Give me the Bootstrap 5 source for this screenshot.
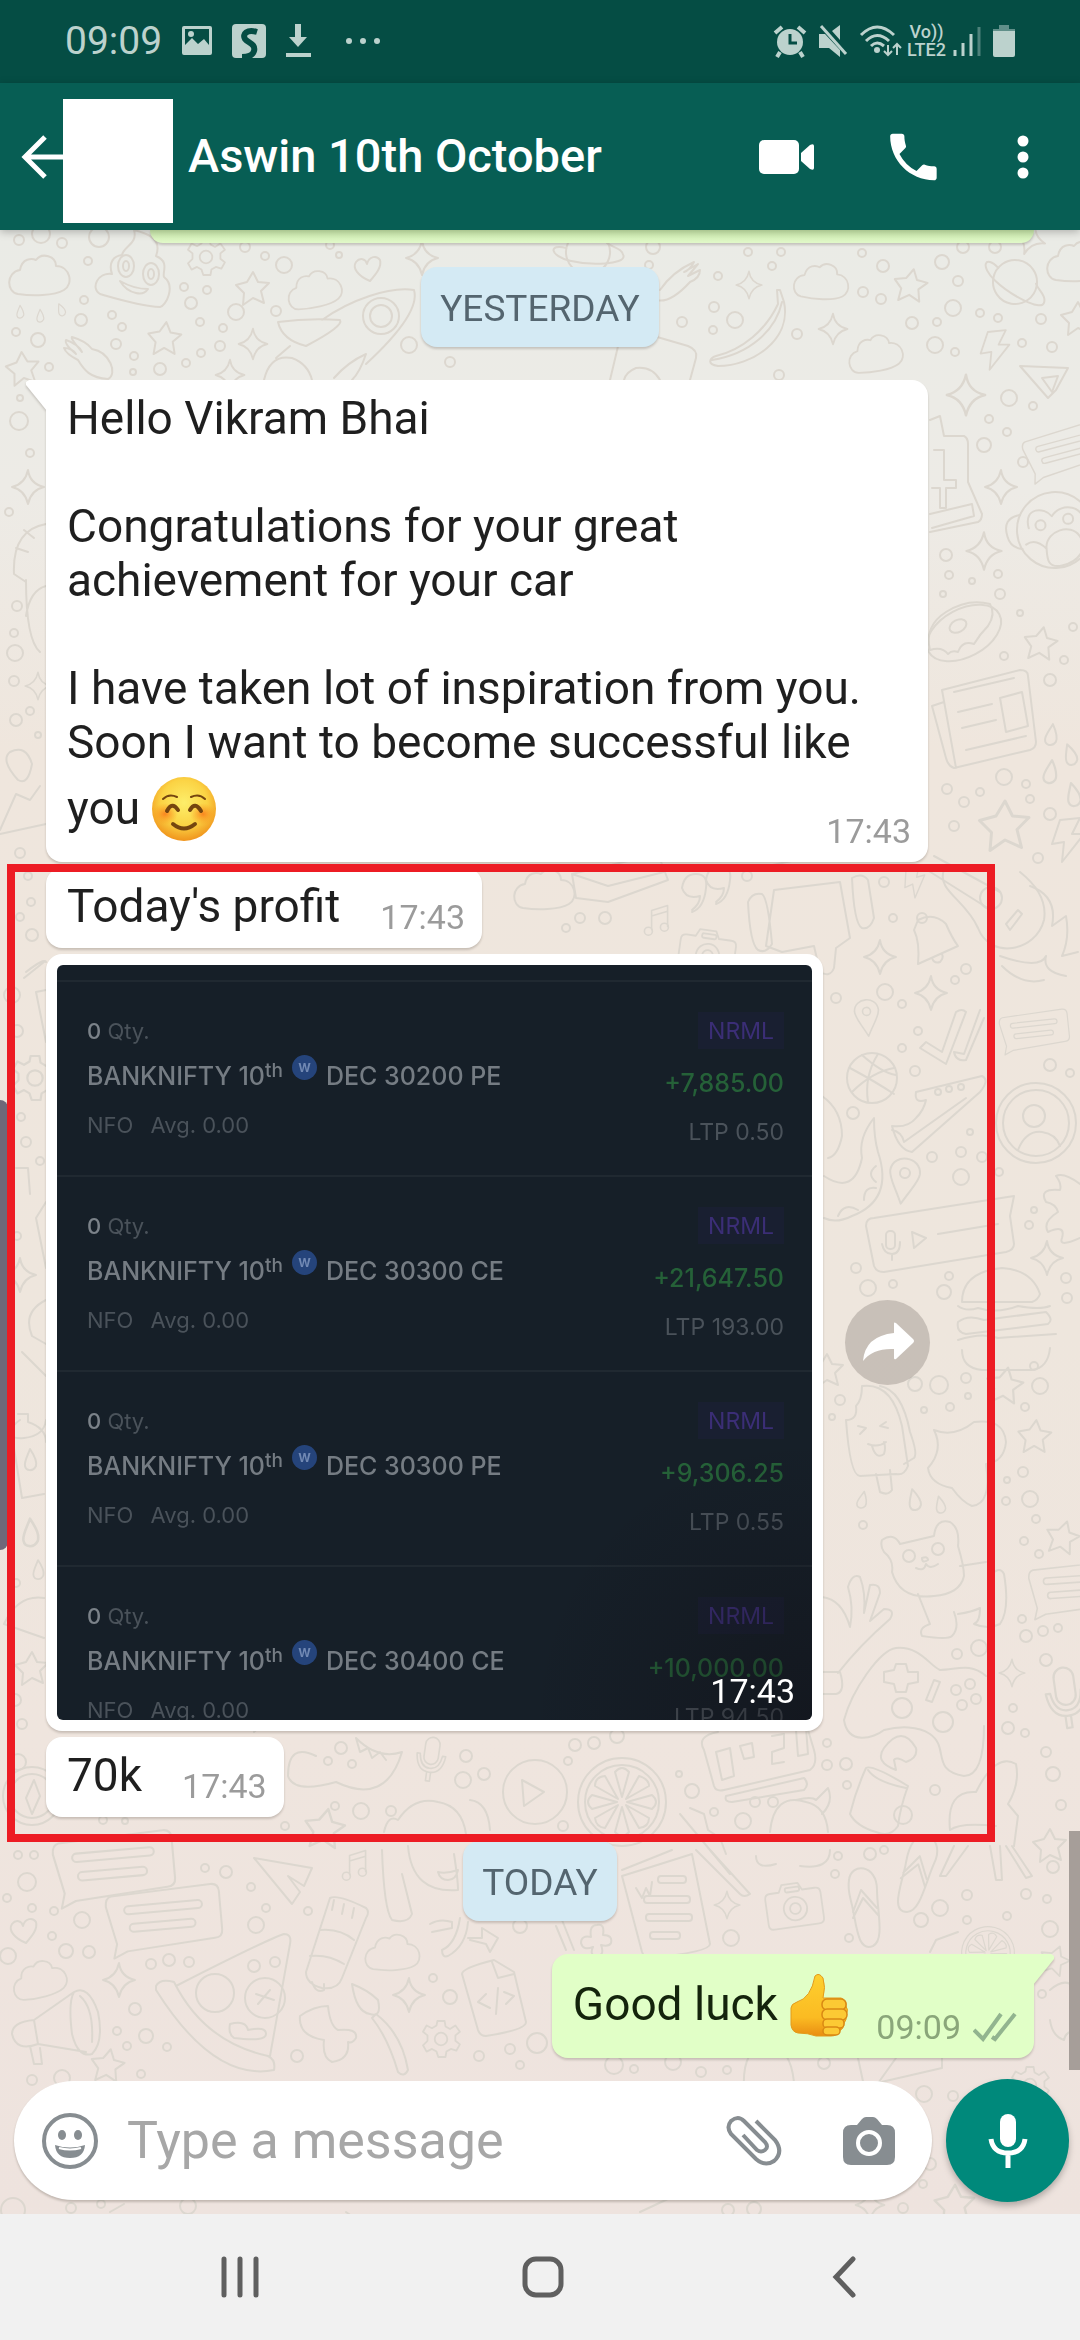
<!DOCTYPE html>
<html lang="en">
<head>
<meta charset="utf-8">
<meta name="viewport" content="width=device-width, initial-scale=1">
<title>Aswin 10th October</title>
<link rel="stylesheet" href="https://cdn.jsdelivr.net/npm/bootstrap@5.3.0/dist/css/bootstrap.min.css">
<style>
  body { font-family: Roboto, "Liberation Sans", sans-serif; background: #f1f1f1; color: #1f1f1f; font-size: 46px; line-height: 54px; }
  svg { display: block; flex: none; }
  .icon-btn { background: none; border: 0; padding: 0; color: inherit; }

  /* status bar */
  .status-bar { background: #054d44; color: #bcd2cd; height: 83px; padding: 0 65px 2px 65px; }
  .notices { gap: 18px; }
  .more-notices { margin-left: 14px; }
  .signals { gap: 11px; }
  .clock { font-size: 39px; line-height: 46px; }
  .volte { font-size: 18px; line-height: 18px; font-weight: 500; margin: 0 -5px 0 -7px; }

  /* header */
  .chat-header { background: #075e54; color: #fff; height: 147px; padding: 0 51px 0 21px; z-index: 3; box-shadow: 0 2px 8px rgba(0,0,0,.25); }
  .avatar-box { width: 110px; height: 124px; background: #fff; }
  .contact-name { font-size: 47px; line-height: 54px; font-weight: 500; margin-left: 15px; padding-bottom: 2px; }
  .header-actions { gap: 70px; }

  /* conversation */
  .conversation { background: linear-gradient(#eaebe6 0, #edebe6 260px, #efe6dd 520px, #eee6dd 1100px, #efe5de 1500px, #eee3de 100%); overflow: hidden; }
  .doodles { position: absolute; inset: 0; width: 100%; height: 100%; fill: none; stroke: #dcd7cf; stroke-width: 2; stroke-linejoin: round; stroke-linecap: round; }
  .msg { background: #fff; border-radius: 16px; padding: 11px 17px 10px 21px; filter: drop-shadow(0 2px 1px rgba(60,50,40,.22)); }
  .msg-row { min-height: 59px; column-gap: 40px; }
  .msg-row.tall { min-height: 83px; column-gap: 27px; }
  .msg-out { background: #e1ffc7; color: #14240c; }
  .msg-prev { height: 13px; border-radius: 0 0 16px 16px; padding: 0; margin-left: 104px; background: linear-gradient(#cdeeae, #e1f8c9); }
  .msg-long { max-width: 882px; border-top-left-radius: 0; }
  .msg-long::before, .msg-out.tailed::after { content: ""; position: absolute; top: 0; width: 21px; height: 31px; background: inherit; }
  .msg-long::before { left: -20px; clip-path: polygon(3px 0, 100% 0, 100% 100%, 0 5px, 0 2px); }
  .msg-out.tailed { border-top-right-radius: 0; }
  .msg-out.tailed::after { right: -20px; clip-path: polygon(0 0, 18px 0, 100% 2px, 100% 5px, 0 100%); }
  .stamp { font-size: 34px; line-height: 40px; color: #9b9b9b; padding-bottom: 1px; }
  .msg-out .stamp { color: #8aa67a; gap: 12px; }
  .emo { display: inline-block; vertical-align: -17px; margin-top: 8px; }
  .day-chip { background: #d4eaf4; color: #54656f; border-radius: 16px; font-size: 37px; line-height: 44px; padding: 20px 19px 16px; filter: drop-shadow(0 2px 1px rgba(60,50,40,.22)); }
  .after-day { margin-top: 33px; }
  .thread { padding: 0 46px; }
  .messages { gap: 6px; margin-top: 6px; }
  .msg-photo { max-width: 777px; padding: 11px; }
  .forward-btn { width: 85px; height: 85px; background: rgba(120,112,106,.32); color: #fff; margin-left: 22px; }

  /* highlight frame over the profit messages */
  .highlight::after { content: ""; position: absolute; top: -4px; bottom: -25px; left: -39px; right: 39px; border: 8px solid #ed1c24; pointer-events: none; z-index: 2; }
  .edge-handle { position: absolute; left: 0; top: 870px; width: 8px; height: 450px; background: #6f6879; border-radius: 0 10px 10px 0; }
  .scroll-thumb { position: absolute; right: 0; bottom: 144px; width: 11px; height: 239px; background: #a69e99; }

  /* positions photo */
  .photo { aspect-ratio: 1; background: #161f28; border-radius: 6px; overflow: hidden; padding-top: 15px; font-family: Inter, sans-serif; font-size: 22px; line-height: 28px; color: #4a525a; }
  .photo::after { content: ""; position: absolute; inset: 0; background: radial-gradient(circle at 100% 100%, rgba(16,14,20,.45), rgba(16,14,20,0) 280px); }
  .position-row { height: 195px; border-top: 2px solid #202931; padding: 35px 28px 0 30px; }
  .pos-name { color: #757c83; font-size: 25px; font-weight: 500; margin: 17px 0 21px; }
  .pos-name sup { font-size: 19px; line-height: 0; top: -8px; vertical-align: baseline; }
  .pos-qty { color: #7b8289; font-weight: 500; }
  .week-dot { width: 25px; height: 25px; border-radius: 50%; background: #25447b; color: #7189b4; font-size: 15px; line-height: 24px; font-weight: 600; margin: -18px 9px 0; }
  .pos-tag { background: #191f31; color: #3b2e76; padding: 5px 10px 4px; margin-top: -5px; font-size: 23px; }
  .pos-gain { color: #256138; font-size: 25px; font-weight: 500; margin: 20px 0 21px; }
  .pos-ltp { font-size: 23px; }
  .photo-stamp { position: absolute; right: 17px; bottom: 9px; z-index: 1; color: #fff; font-family: Roboto, sans-serif; font-size: 34px; line-height: 40px; }

  /* composer */
  .composer { padding: 0 11px 12px 14px; margin-top: 21px; gap: 14px; }
  .compose-box { background: #fff; border-radius: 60px; height: 119px; padding: 0 37px 0 28px; color: #878d91; filter: drop-shadow(0 2px 1px rgba(60,50,40,.25)); }
  .compose-box input { font-size: 52px; line-height: 60px; padding: 0 0 0 29px; background: none; }
  .compose-box input::placeholder { color: #a7a7a7; opacity: 1; }
  .compose-tools { gap: 61px; }
  .mic-btn { width: 123px; height: 123px; background: #00897b; color: #fff; filter: drop-shadow(0 4px 3px rgba(0,0,0,.25)); }
  .nav-keys { height: 126px; background: #f1f1f1; color: #5f5f5f; padding: 0 218px 0 221px; }
</style>
</head>
<body class="d-flex flex-column min-vh-100">

<div class="status-bar d-flex align-items-center justify-content-between">
  <div class="notices d-flex align-items-center">
    <span class="clock">09:09</span>
    <svg width="34" height="34" viewBox="0 0 34 34"><path fill="currentColor" fill-rule="evenodd" d="M4 2h26a2 2 0 0 1 2 2v25a2 2 0 0 1-2 2H4a2 2 0 0 1-2-2V4a2 2 0 0 1 2-2Zm1 3v16l7-7 6 6 6-5 5 6V5Z"/><circle cx="11" cy="10" r="3" fill="currentColor"/></svg>
    <svg width="34" height="34" viewBox="0 0 34 34"><rect width="34" height="34" rx="4" fill="currentColor"/><path d="M25 8C15 5 10 10 13 15c3 4 11 5 9 12-1 4-5 6-12 6" fill="none" stroke="#054d44" stroke-width="6"/></svg>
    <svg width="28" height="36" viewBox="0 0 28 36"><path fill="currentColor" d="M11 1h6v13h6l-9 10-9-10h6ZM2 30h25v4H2Z"/></svg>
    <svg class="more-notices" width="40" height="10" viewBox="0 0 40 10"><g fill="currentColor"><circle cx="5" cy="5" r="3"/><circle cx="19" cy="5" r="3"/><circle cx="33" cy="5" r="3"/></g></svg>
  </div>
  <div class="signals d-flex align-items-center">
    <svg width="34" height="36" viewBox="0 0 34 36"><circle cx="17" cy="19" r="13" fill="currentColor"/><path d="M2 10 9 4M32 10l-7-6M7 29l-3 5M27 29l3 5" stroke="currentColor" stroke-width="4"/><path d="M17 11v9h7" fill="none" stroke="#054d44" stroke-width="3"/></svg>
    <svg width="30" height="36" viewBox="0 0 30 36"><path fill="currentColor" d="M1 11h6l15 16v7L11 25H1ZM22 2v15l-8-9Z"/><path d="m3 3 25 28" stroke="currentColor" stroke-width="3"/></svg>
    <svg width="44" height="36" viewBox="0 0 44 36"><g fill="none" stroke="currentColor" stroke-width="3"><path d="M2 12q16-16 33 0M7 18q11-11 23 0M12 23q6-6 13 0"/><path d="M29 22v10m-4-4 4 4 4-4M38 32V21m-4 4 4-4 4 4" stroke-width="2"/></g><circle cx="18" cy="27" r="3" fill="currentColor"/></svg>
    <span class="volte text-center">Vo))<br>LTE2</span>
    <svg width="30" height="34" viewBox="0 0 30 34"><g stroke="currentColor" stroke-width="3"><path d="M3 26v6M11 19v13M19 10v22"/><path d="M27 3v29" opacity=".4"/></g></svg>
    <svg width="22" height="36" viewBox="0 0 22 36"><path fill="currentColor" opacity=".5" d="M6 2h10v4h6v4H0V6h6Z"/><path fill="currentColor" d="M0 8h22v24a2 2 0 0 1-2 2H2a2 2 0 0 1-2-2Z"/></svg>
  </div>
</div>

<header class="chat-header position-relative d-flex align-items-center">
  <button class="icon-btn" type="button" aria-label="Back"><svg width="42" height="46" viewBox="0 0 42 46"><path d="M42 23H5M24 3 4 23l20 20" fill="none" stroke="currentColor" stroke-width="5"/></svg></button>
  <div class="avatar-box flex-shrink-0 align-self-start mt-3"></div>
  <h1 class="contact-name mb-0 flex-grow-1">Aswin 10th October</h1>
  <div class="header-actions d-flex align-items-center">
    <button class="icon-btn" type="button" aria-label="Video call"><svg width="56" height="36" viewBox="0 0 56 36"><rect y="1" width="40" height="34" rx="5" fill="currentColor"/><path fill="currentColor" d="m42 14 9-8q4-2 4 1v22q0 3-4 1l-9-8Z"/></svg></button>
    <button class="icon-btn" type="button" aria-label="Call"><svg width="62" height="62" viewBox="1 0 24 24"><path fill="currentColor" d="M6.6 10.8a15.100 15.100 0 0 0 6.600 6.600l2.200-2.200c.3-.3.7-.4 1-.2 1.100.4 2.300.6 3.600.6.6 0 1 .4 1 1V20c0 .6-.4 1-1 1C10.600 21 3 13.400 3 4c0-.6.4-1 1-1h3.500c.6 0 1 .4 1 1 0 1.300.2 2.500.6 3.600.1.300 0 .7-.3 1Z"/></svg></button>
    <button class="icon-btn" type="button" aria-label="More options"><svg width="12" height="46" viewBox="0 0 12 46"><g fill="currentColor"><circle cx="6" cy="7" r="5.500"/><circle cx="6" cy="23" r="5.500"/><circle cx="6" cy="39" r="5.500"/></g></svg></button>
  </div>
</header>

<main class="conversation position-relative d-flex flex-column flex-grow-1">
  <svg class="doodles" viewBox="0 230 1080 1984" preserveAspectRatio="xMidYMin slice" aria-hidden="true">
    <defs>
      <path id="d-cloud" d="M-22 18C-34 16-34-4-20-6-18-18-8-18-4-16 2-24 16-20 16-10 30-10 34 8 24 14 14 20-8 20-22 18Z"/>
      <path id="d-star" d="m0-16 5 10 11 1-8 8 3 12-11-5-10 7 1-12-8-8 11-3Z"/>
      <path id="d-spark" d="M0-17Q2-3 16 0 3 3 0 17-3 3-16 0-3-3 0-17Z"/>
      <path id="d-drop" d="M0-11C6-2 7 2 6 6 3 12-4 11-5 6-6 2-3-3 0-11Z"/>
      <path id="d-heart" d="M2 13C-10 8-16 0-12-6-8-11-2-9-1-4 1-12 9-13 12-8 14-1 8 6 2 13Z"/>
      <g id="d-gear"><path d="m-4-20 8 0 1 6 5 3 6-4 5 7-5 4v6l5 4-4 7-6-2-5 3-1 6h-8l-2-6-5-3-6 3-4-7 5-5v-6l-5-4 4-7 6 3 5-3Z"/><circle r="7"/></g>
      <path id="d-bolt" d="m-8-20 20-2-8 16h12L-6 22l2-20-12 2Z"/>
      <g id="d-note"><path d="M-8 12V-12L12-18V8M-8-5 12-11"/><circle cx="-12" cy="14" r="5"/><circle cx="8" cy="9" r="5"/></g>
      <g id="d-bubble"><path d="M-52-26 48-30q8 0 8 8V16q0 8-8 8L-40 30l-14 6 4-14-8-38q0-9 6-10Z"/><rect x="-40" y="-15" width="78" height="8" rx="4"/><rect x="-36" y="3" width="66" height="8" rx="4"/></g>
      <g id="d-camera"><path d="M-26-16h10l4-8h18l4 8h14q6 0 6 6v28q0 6-6 6h-50q-6 0-6-6v-28q0-6 6-6Z"/><circle cy="4" r="13"/><circle cy="4" r="6"/><rect x="-9" y="-20" width="16" height="5" rx="2"/></g>
      <g id="d-planet"><circle r="22"/><path d="M-19-11C-34-22-38-10-20 2S30 24 32 16 24 4 21-2"/></g>
      <g id="d-pin"><path d="M0 24C-8 8-15 0-15-8-14-26 14-26 15-8 15 0 8 8 0 24Z"/><circle cy="-7" r="5"/></g>
      <g id="d-slice"><circle r="44"/><circle r="37"/><path d="M0-5-7-30q7-8 14 0ZM4-3 17-26q10 3 10 10ZM5 0l25-7q8 7 0 14ZM4 3l23 13q0 9-10 10ZM0 5l7 25q-7 8-14 0ZM-4 3l-13 23q-9-1-10-10ZM-5 0l-25 7q-8-7 0-14ZM-4-3-27-16q0-9 10-10Z"/></g>
      <g id="d-mic"><rect x="-9" y="-26" width="18" height="34" rx="9"/><path d="M-18-4q2 22 18 22T18-4h-4Q12 13 0 13T-14-4ZM-3 19v10h5V19"/></g>
      <g id="d-flop"><path d="M-16-30C-14-48 12-46 12-20 12 0 20 30 8 36-6 42-8 20-12 0-14-12-18-18-16-30ZM-12 2-4-20 12-2M-12 8-2-12 14 6"/></g>
      <g id="d-monkey"><circle r="38"/><path d="M-26-4C-30-26-8-24-2-14 8-28 34-22 28-2M-30 12q10-6 20 6M-10 16C-8 0 16-6 24 8s-4 26-20 28-14-10-14-20ZM-34-18q-18 2-14 20 2 12 14 14"/><circle cx="-14" cy="-6" r="5"/><circle cx="14" cy="-10" r="5"/></g>
    </defs>
    <g id="doodle-dots"></g>
    <g id="doodle-marks"></g>
    <!-- swirl with googly eyes -->
    <path d="M122 255C124 246 138 244 134 230 150 234 162 240 156 256 170 262 162 272 164 277 176 286 166 306 160 307 140 306 114 298 100 294 90 288 98 272 112 274 108 262 114 256 122 255ZM120 281q14 8 28 8-4 6-12 4-10-2-16-12Z"/>
    <ellipse cx="126" cy="266" rx="8" ry="11"/><ellipse cx="151" cy="274" rx="8" ry="11"/><ellipse cx="126" cy="266" rx="3" ry="5"/><ellipse cx="151" cy="274" rx="3" ry="5"/>
    <!-- rocket -->
    <path d="M322 320C350 300 390 286 414 290 420 310 392 340 366 364M278 322q30-4 62-2 4 6-34 26-24-6-28-24ZM290 346l-14 12M264 380q6-26 28-22 16 6 20 22M334 378q14-16 32-24-6 18-14 26"/><circle cx="381" cy="316" r="18"/><circle cx="381" cy="316" r="11"/>
    <!-- hand -->
    <path d="M66 340q12 4 16 12-12-14-10-15 14 4 20 12C110 352 118 374 108 379 90 378 84 370 78 360q-12-6-14-12 8 0 12 6-12-10-10-14Z"/>
    <!-- banana -->
    <path d="M780 290l4 12C792 340 752 366 718 366 706 364 710 358 716 356 742 350 766 330 778 304l-1-14ZM782 302C776 330 750 354 712 360"/>
    <!-- fork and ticket -->
    <path d="M660 290q12-18 34-28-4 8-10 10l14-8-10 12 12-6q0 8-10 12-20 22-34 18M610 380l10-42M640 332l48 14q10 4 8 12l-6 22M660 380q-8-14-24-12-10 4-12 12"/>
    <!-- paper wedge -->
    <path d="M1020 366l48 2-12 22-8 8ZM1042 378l16-2-6 16Z"/>
    <!-- bag and books -->
    <path d="M930 420l10-4 4 20h20q4 2 4 8v38l14 32q0 6-4 8l-48 10M930 514l42-10 2 12-42 12M934 450h10v30h12v8h-10v20h-6v-20h-8"/>
    <!-- donut -->
    <ellipse cx="964" cy="633" rx="40" ry="24" transform="rotate(-28 964 633)"/><path d="M930 650q-6-24 16-38t44-8q6 10-2 22-8 8-14 18-12-4-16 8-6-2-10 2-6-8-18-4Z"/><ellipse cx="958" cy="626" rx="9" ry="6" transform="rotate(-28 958 626)"/>
    <!-- newspaper -->
    <path d="M942 690l78-20q8 0 8 6l8 66q0 6-6 8l-76 18q-6-2-8-10l-14-52 12-4M942 690l14 78M954 692l60-14M958 712l34-8M962 728l34-8M966 750l60-14M1000 698l22-6 6 34-22 6Z"/>
    <!-- packet, easel, guitar -->
    <path d="M572 874l86-20 10 26-60 22-32-4ZM572 874l36 12 56-14M768 866l84-18M774 890l66-8 10 56-14 10-2 20q-4 10-14 4l-6-26-32 6-16-6ZM748 902q4-10 14-8 6 4 10 50-6 10-14 6-8-6-10-48ZM852 878q10-6 16 2l6 38q-4 12-12 10-8-4-10-50Z"/>
    <path d="M924 868l70 44M934 856l66 36M944 870C936 890 966 900 978 928 990 960 1036 952 1044 920 1048 896 1030 880 1020 872M1006 924l12-14 4 4-12 16Z"/><circle cx="991" cy="898" r="11"/><path d="M1030 886q28 10 22 40l14-10q4 22-4 40l16-4M1000 956q40 14 46 0-4 16 20 20M1002 966q20 20 42 14"/>
    <!-- bell -->
    <path d="M918 920q16-8 28 4 6 14 12 22l-40 18q2-22-4-34ZM932 958q2 6 8 4 4-4 2-8"/><circle cx="922" cy="918" r="5"/>
    <!-- quotes -->
    <path d="M692 910q8-6 8-14-14 4-18-8 2-14 14-14t10 14q-2 20-14 24M716 902q8-6 8-14-14 4-18-8 2-14 14-14t10 14q-2 20-14 24"/>
    <!-- double tick -->
    <path d="M920 1048l6-6 16 10 14-40q6-4 10 0l-20 52ZM954 1052l10 2 16-44M954 1052q2 10 12 8l18-42"/>
    <!-- basketball -->
    <circle cx="872" cy="1078" r="25"/><path d="M850 1068q26 14 44 26M862 1055q20 18 34 20M868 1102q-4-26 10-48M852 1092q20-20 42-24"/>
    <!-- shoe -->
    <path d="M916 1092l66-16q8 4-2 16l-68 60q-14-2-20-26 16 2 24-8 8-8 10-18-12 4-10-8ZM892 1130q10 2 12 12l62-44"/><circle cx="938" cy="1092" r="3"/><circle cx="949" cy="1089" r="3"/><circle cx="961" cy="1087" r="3"/>
    <!-- tentacle -->
    <path d="M822 1096q20 14 20 40-4 20-14 22M824 1176q30 20 38-18-4-20 12-40 0 20 4 34 16 48-26 64-16 8-28 2M838 1216q6-14 20-6M864 1200q0-14 12-12M876 1182q-10-8 0-16"/>
    <!-- portrait -->
    <circle cx="1036" cy="1123" r="40"/><circle cx="1036" cy="1123" r="33"/><circle cx="1034" cy="1116" r="11"/><path d="M1018 1150q8-20 24-18 14 2 18 14"/>
    <!-- voice note -->
    <path d="M866 1226q0-8 8-8l140-22-4 20 4 28q0 6-8 8l-122 20q-8 0-10-6ZM938 1234l60-10M912 1232l14 6-12 10Z"/><rect x="886" y="1231" width="9" height="18" rx="4"/><path d="M882 1244q2 10 10 10t8-12M892 1254v6"/>
    <!-- squid, burger -->
    <path d="M1080 1184q-16-12-24-8 6 8 4 14-22-2-14 12 10 2 12 10-16 10-10 20 18-8 14 6-4 10 18 0"/>
    <path d="M962 1302q0-30 40-34 30 2 38 26-2 6-8 8-40 0-70 0ZM958 1306q8 6 20 2 20 6 40-2 22 4 32 0M958 1322q10-8 26-2l62-8q8 8 2 12l-82 10q-10-2-8-12ZM958 1340q24-8 40-2l58-4M962 1350q0 18 20 20h50q16-2 18-22"/>
    <!-- ice cream and cap -->
    <path d="M846 1420q12 0 10-14 6-6 6-20 30-4 40 40l6 40q-4 10-12 8l-36 2q-10 0-14-56ZM880 1386q22 4 30 46 8 22 4 26l-10 6M876 1474l4 18q8 4 12-2l-2-20M858 1426l8 2-6 6M886 1422l-6 4 8 2M868 1444q10 4 18-2M872 1446q4 14 12 8 2-6 0-12"/>
    <path d="M934 1430q20 8 40-8 30-4 32 20-2 20-20 22 6 40-14 42-10-4-20-18-22-4-24-20 16-18 6-38Z"/>
    <!-- cat -->
    <path d="M882 1540q12-8 18 4l34-8q2-18 16-14 10 6 8 24 6 20 6 30-4 18-30 20-34 4-42-24 2-12-8-20-4-6-2-12ZM922 1558q6-2 6 2-6 4-6-2ZM916 1568q8 4 10-4 4 6 12 0M918 1594q8 20 12 30-12 4-8 12 26 4 30 0 8-8 2-24M958 1614q14-2 22-6 0 14-6 16 14 6 26 0 10-14 4-50-4-8-12 0M960 1566l26-4"/><circle cx="909" cy="1556" r="6"/><circle cx="938" cy="1549" r="6"/>
    <!-- hand and gamepad -->
    <path d="M822 1597q20 2 28 30 4-20-2-40 4-14 12-10 6 16 4 36l6-28q10-2 10 8l-10 28 14-12q12 0 6 10-30 26-52 54M822 1672h18q6 20-4 22h-14"/>
    <path d="M844 1720C852 1690 880 1650 896 1648 920 1646 930 1666 940 1670 956 1670 970 1662 986 1676M844 1720c4 26 30 18 40 10 16-4 34-4 46 4 20 14 0 36 34 42 14 0 20-20 20-50M896 1664h10l2 8 10 0v10l-10 2-2 8h-10l-2-8-10-2v-10l10-2ZM934 1680l6 2-8 20-6-2Z"/><circle cx="902" cy="1708" r="10"/><circle cx="943" cy="1722" r="10"/><circle cx="956" cy="1690" r="5"/><circle cx="970" cy="1684" r="5"/><circle cx="962" cy="1705" r="5"/><circle cx="976" cy="1699" r="5"/>
    <!-- clock, cup, shells -->
    <path d="M704 1750q-8-14 14-18M724 1790l86-20q8-6 4-20l-6-20M704 1750l10 36q2 6 10 4M726 1796l78-18q6 6 0 12l-72 12q-8 0-6-6ZM716 1752l14-4 4 28-12 4ZM740 1746l12-3 2 14-10 2ZM772 1736l12-2v14l-12 4v12l12-2M796 1730l10-2 2 26-10 2Z"/>
    <path d="M866 1768q6-4 42 18-8 22-10 40-8 12-22 6-20-6-26-18 6-24 16-46ZM868 1770q8 12 38 18M884 1748q18-24 32 0 2 10-10 14-10-6-12-2l2 10q-22-8-12-22Z"/><circle cx="903" cy="1815" r="9"/>
    <path d="M770 1832q4-40 36-30 20 4 22 30M796 1800q16-4 20 0l12-12q6 14-6 26M680 1814l50 60M690 1808l14 6 4 16 12 8 6 16M950 1830q-4-40 26-38 20-40 40-28 4 20-8 40l10 12-4 30M950 1830q10-8 46-4"/>
    <!-- crocodile, play, compass -->
    <path d="M316 1756q-28-14-28 20 6 18 48 6 50 24 66-30-24 8-46-14l4 14 8-4 4 10 8-6 6 8M254 1732l4-4"/><circle cx="535" cy="1792" r="32"/><path d="M522 1780l22 12-20 14Z"/><circle cx="32" cy="1796" r="29"/><circle cx="32" cy="1796" r="22"/><path d="M34 1780l6 16-8 18-6-16Z"/><circle cx="18" cy="1762" r="8"/>
    <path d="M384 1832q4-18 14-12 16-24 40-18 24 4 28 32M470 1800q18 2 20 30"/>
    <!-- bottle, leaf, bell, frames on the left edge -->
    <path d="M46 1420q-2 16-22 18t-22-16M22 1352l24 24M18 1414h10v8q18 6 18 20M20 1420q-10 6-8 16l10 62 22-4M4 1624q14-30 40-26M4 1624l40 14"/>
    <path d="M46 524q-34 6-32 50l12 8M24 530l10 8M16 548l12 4M26 580q0 60 14 72M46 586q-16 4-20 30M18 780q-18-20-8-28 16-8 22 12-4 22-14 16ZM0 830l16-36 14 6 10-14M0 834l46-10M24 978l20-16M26 972q18-14 20-10M36 992l10-2M36 992l10 50M36 1218l10-16M36 1218l10 50M46 1300q-24 12-14 36l14 8M16 1168h12l2 26"/>
    <!-- file, document, paper plane -->
    <path d="M462 1974q0-6 32-14l20 12 12 50q0 8-40 14-6 0-8-6ZM492 1962l6 16 16-4M486 1994l-8 8 12 6M498 1988l-2 26M504 1992l10 4-8 8"/>
    <path d="M622 1876q26-8 70-22l18 90q0 8-60 14-6 0-8-6ZM636 1888l6 10 4-10 4 8 2-14"/><rect x="658" y="1876" width="28" height="7" rx="3"/><rect x="644" y="1896" width="46" height="7" rx="3"/><rect x="646" y="1914" width="46" height="7" rx="3"/><rect x="650" y="1932" width="30" height="7" rx="3"/>
    <path d="M254 1858l58 10-8 18-16-10 12 16-8 12ZM622 1870l50-20M710 1850l40 44q-6 4-10 0l-44-44M562 1920l12 30M556 1926l10 24"/>
    <!-- megaphone, pizza, tube, brush, blob -->
    <path d="M34 2020l40-28M38 2044l48 8M34 2020q-22 2-22 14 4 18 26 10ZM74 1992q14-8 24 20 6 30-6 42-14 4-20-20-4-32 2-42ZM80 1996q14 12 12 46M30 2046l4 18h8l-2-16"/>
    <path d="M176 1986q90-46 108-52 8 0 6 10l-20 112M156 1986q4-8 18-4 30 60 94 74 8 4 6 14-60 12-118-80Z"/><circle cx="215" cy="1993" r="19"/><circle cx="265" cy="1998" r="20"/><path d="M230 2024q16-4 18 6 18-4 18 4t-32 4Q228 2034 230 2024ZM256 1994l18 6M258 2004l12-14"/>
    <path d="M330 1898q8-4 36 10 4 4 0 10l-24 60q-4 12-20 10-16-4-16-16ZM334 1900l-2 10M344 1904l-2 10M354 1908l-2 10M320 1930q20-2 34 10M310 1956q18-2 34 8M312 1982q4 12 12 8v-6"/>
    <path d="M352 1984q16 6 26 16 4 18-8 14-14-2-18-30ZM376 2014q26 20 32 56-4 8-10 2-10-34-26-54Z"/><path d="M300 2016q14-10 28-10 2 20 10 24 20-2 18 8-4 6-8 4 2 18-16 20-10-4-8-22-26-4-24-24Z"/>
    <path d="M382 1850q2 60 10 70 16 4 20-6l-10-40M408 1846q4 48 50 44 0-10-4-36M438 1872q8 2 20-2-2 10-10 10-8 0-10-8ZM430 1924q10-6 22-2v6l-20 4M460 1918q-4 26-18 32 0 8 6 6 18-10 20-34M468 1938h14v-10l16 10-8 14-4-8-16-4"/>
    <path d="M597 1925q8-2 6 10 10 0 8 8-2 4-10 2 4 10-4 12-8-2-4-10-10 4-12-4 0-8 10-6-2-12 6-12ZM1050 1990q30-26 36 40-20-2-22 10-12-4-14-20M936 1940l22-8M936 1940l-6 12M954 1846l-14 30h6l22-30M990 1846l6 34h6l-2-34M1012 1846l20 30-6 2-20-32M756 1856q0 14 20 8M800 1866q30 4 30-16"/>
    <path d="M744 2088q-2-40 22-42t28 36M858 2058l6 28 78-18v-12M876 2086l20-28M346 2212l14 10M110 2212l14-8M640 2212l30-14"/>
  </svg>
  <div class="edge-handle"></div>

  <div class="thread position-relative d-flex flex-column flex-grow-1">
    <div class="msg msg-out msg-prev align-self-stretch"></div>

    <div class="day-chip align-self-center mt-4">YESTERDAY</div>

    <div class="msg msg-long after-day position-relative">
      Hello Vikram Bhai<br><br>
      Congratulations for your great<br>
      achievement for your car<br><br>
      I have taken lot of inspiration from you.<br>
      Soon I want to become successful like
      <div class="msg-row tall d-flex justify-content-between">
        <span>you <svg class="emo" width="66" height="64" viewBox="0 0 66 64" role="img" aria-label="smiling face">
          <defs>
            <radialGradient id="face" cx=".5" cy=".4" r=".6"><stop offset="0" stop-color="#fdee6a"/><stop offset=".6" stop-color="#fbd344"/><stop offset="1" stop-color="#f0941c"/></radialGradient>
            <radialGradient id="blush"><stop offset="0" stop-color="#f9781a" stop-opacity=".85"/><stop offset="1" stop-color="#f9981a" stop-opacity="0"/></radialGradient>
          </defs>
          <ellipse cx="33" cy="32" rx="32" ry="32" fill="url(#face)"/>
          <ellipse cx="14" cy="37" rx="13" ry="11" fill="url(#blush)"/><ellipse cx="52" cy="37" rx="13" ry="11" fill="url(#blush)"/>
          <g fill="none" stroke="#75450f" stroke-linecap="round"><path d="M12 22q6-6 14-2M40 20q8-4 14 2" stroke-width="2"/><path d="M16 34q5-10 11-1M39 33q5-9 11 1" stroke-width="4"/><path d="M22 47q11 9 22 0" stroke-width="4"/></g>
        </svg></span>
        <span class="stamp align-self-end">17:43</span>
      </div>
    </div>

    <section class="messages highlight position-relative d-flex flex-column align-items-start">
      <div class="msg"><div class="msg-row d-flex">
        <span>Today's profit</span><span class="stamp align-self-end">17:43</span>
      </div></div>

      <div class="d-flex align-items-center w-100">
        <div class="msg msg-photo w-100">
          <div class="photo position-relative">
            <div class="position-row d-flex justify-content-between">
              <div><div><span class="pos-qty">0</span> Qty.</div>
                <div class="pos-name d-flex align-items-center"><span>BANKNIFTY 10<sup>th</sup></span><span class="week-dot text-center">w</span><span>DEC 30200 PE</span></div>
                <div>NFO&ensp; Avg. 0.00</div></div>
              <div class="text-end"><span class="pos-tag d-inline-block">NRML</span><div class="pos-gain">+7,885.00</div><div class="pos-ltp">LTP 0.50</div></div>
            </div>
            <div class="position-row d-flex justify-content-between">
              <div><div><span class="pos-qty">0</span> Qty.</div>
                <div class="pos-name d-flex align-items-center"><span>BANKNIFTY 10<sup>th</sup></span><span class="week-dot text-center">w</span><span>DEC 30300 CE</span></div>
                <div>NFO&ensp; Avg. 0.00</div></div>
              <div class="text-end"><span class="pos-tag d-inline-block">NRML</span><div class="pos-gain">+21,647.50</div><div class="pos-ltp">LTP 193.00</div></div>
            </div>
            <div class="position-row d-flex justify-content-between">
              <div><div><span class="pos-qty">0</span> Qty.</div>
                <div class="pos-name d-flex align-items-center"><span>BANKNIFTY 10<sup>th</sup></span><span class="week-dot text-center">w</span><span>DEC 30300 PE</span></div>
                <div>NFO&ensp; Avg. 0.00</div></div>
              <div class="text-end"><span class="pos-tag d-inline-block">NRML</span><div class="pos-gain">+9,306.25</div><div class="pos-ltp">LTP 0.55</div></div>
            </div>
            <div class="position-row d-flex justify-content-between">
              <div><div><span class="pos-qty">0</span> Qty.</div>
                <div class="pos-name d-flex align-items-center"><span>BANKNIFTY 10<sup>th</sup></span><span class="week-dot text-center">w</span><span>DEC 30400 CE</span></div>
                <div>NFO&ensp; Avg. 0.00</div></div>
              <div class="text-end"><span class="pos-tag d-inline-block">NRML</span><div class="pos-gain">+10,000.00</div><div class="pos-ltp">LTP 94.50</div></div>
            </div>
            <span class="photo-stamp">17:43</span>
          </div>
        </div>
        <button class="icon-btn forward-btn rounded-circle d-flex align-items-center justify-content-center flex-shrink-0" type="button" aria-label="Forward">
          <svg width="54" height="42" viewBox="0 0 54 42"><path fill="currentColor" d="M33 1q0-1 2 0l17 16q2 2 0 4L35 37q-2 1-2-1V27Q12 26 2 39 4 14 33 11Z"/></svg>
        </button>
      </div>

      <div class="msg"><div class="msg-row d-flex">
        <span>70k</span><span class="stamp align-self-end">17:43</span>
      </div></div>
    </section>

    <div class="day-chip align-self-center mt-4">TODAY</div>

    <div class="msg msg-out tailed after-day position-relative align-self-end">
      <div class="msg-row tall d-flex">
        <span>Good luck <svg class="emo" width="60" height="64" viewBox="0 0 60 64" role="img" aria-label="thumbs up">
          <defs><linearGradient id="thumb" x1="0" y1="0" x2="0" y2="1"><stop offset="0" stop-color="#fdd02f"/><stop offset=".7" stop-color="#fbbb22"/><stop offset="1" stop-color="#e98d12"/></linearGradient></defs>
          <path fill="url(#thumb)" stroke="#e39a1a" d="M2 35q0-4 6-6 14-4 18-26 4-4 8 2 3 9 0 20h18q6 2 5 8 3 4 0 9 1 5-2 8 0 6-5 8-2 5-8 5H27q-8-3-18-3-6-1-7-8Z"/>
          <g fill="#fcc934" stroke="#d98813" stroke-width="1.500"><rect x="33" y="26" width="24" height="11" rx="5"/><rect x="33" y="36" width="25" height="11" rx="5"/><rect x="34" y="46" width="21" height="9" rx="4"/><rect x="34" y="54" width="17" height="8" rx="4"/></g>
        </svg></span>
        <span class="stamp align-self-end d-flex align-items-center">09:09
          <svg width="44" height="30" viewBox="0 0 44 30"><path d="M1 18l9 9L28 2M19 25l3 2L42 2" fill="none" stroke="#92b48f" stroke-width="4"/></svg></span>
      </div>
    </div>
  </div>

  <form class="composer position-relative d-flex align-items-center">
    <div class="compose-box d-flex align-items-center flex-grow-1">
      <button class="icon-btn" type="button" aria-label="Emoji"><svg width="56" height="56" viewBox="0 0 56 56"><circle cx="28" cy="28" r="26" fill="none" stroke="currentColor" stroke-width="4"/><ellipse cx="20" cy="22" rx="4" ry="5" fill="currentColor"/><ellipse cx="36" cy="22" rx="4" ry="5" fill="currentColor"/><path fill="currentColor" d="M13 32q15 5 30 0-1 13-15 13T13 32Z"/><path stroke="#fff" stroke-width="2" d="M17 35q11 3 22 0" fill="none"/></svg></button>
      <input class="form-control border-0 shadow-none" type="text" placeholder="Type a message" aria-label="Type a message">
      <div class="compose-tools d-flex align-items-center">
        <button class="icon-btn" type="button" aria-label="Attach"><svg width="56" height="52" viewBox="0 0 56 52"><path d="M30 6 49 25q9 12-1 21-9 6-18-2L5 19q-5-7 0-13 7-6 13 0l21 21q4 5 0 8-4 3-8 0L17 20" fill="none" stroke="currentColor" stroke-width="4"/></svg></button>
        <button class="icon-btn" type="button" aria-label="Camera"><svg width="52" height="50" viewBox="0 0 52 50"><path fill="currentColor" d="M8 9h6l5-6q2-2 4-2h7q2 0 4 2l5 6h5q8 0 8 8v24q0 8-8 8H8q-8 0-8-8V17q0-8 8-8Z"/><circle cx="26" cy="27" r="11" fill="none" stroke="#fff" stroke-width="4"/></svg></button>
      </div>
    </div>
    <button class="icon-btn mic-btn rounded-circle d-flex align-items-center justify-content-center flex-shrink-0" type="button" aria-label="Voice message"><svg width="40" height="56" viewBox="0 0 40 56"><rect x="12" y="1" width="16" height="33" rx="8" fill="currentColor"/><path d="M3 26q2 14 17 14t17-14M20 40v15" fill="none" stroke="currentColor" stroke-width="5"/></svg></button>
  </form>
  <div class="scroll-thumb"></div>
</main>

<nav class="nav-keys d-flex align-items-center justify-content-between">
  <button class="icon-btn" type="button" aria-label="Recent apps"><svg width="38" height="42" viewBox="0 0 38 42"><path d="M3 3v36M19 3v36M35 3v36" stroke="currentColor" stroke-width="5" stroke-linecap="round"/></svg></button>
  <button class="icon-btn" type="button" aria-label="Home"><svg width="42" height="42" viewBox="0 0 42 42"><rect x="3" y="3" width="36" height="36" rx="11" fill="none" stroke="currentColor" stroke-width="5"/></svg></button>
  <button class="icon-btn" type="button" aria-label="Back"><svg width="36" height="42" viewBox="0 0 36 42"><path d="M27 3 10 21l17 18" fill="none" stroke="currentColor" stroke-width="5" stroke-linecap="round"/></svg></button>
</nav>

<script src="https://cdn.jsdelivr.net/npm/bootstrap@5.3.0/dist/js/bootstrap.bundle.min.js"></script>
<script>
  // wallpaper: small rings as x,y,radius triples
  const rings = [19,240,5,41,234,9,62,243,5,99,237,10,88,261,4,245,247,5,265,256,4,284,265,8,330,245,4,339,255,3,184,287,4,207,290,4,191,303,6,84,300,4,112,315,4,81,320,6,122,327,4,200,322,4,236,312,8,276,311,5,16,332,4,38,340,7,223,328,4,220,346,5,116,344,5,134,356,4,201,353,4,133,372,3,186,363,4,160,369,6,49,367,4,409,345,8,450,362,5,
    653,247,7,649,265,4,748,252,4,781,252,4,772,266,4,862,253,4,883,266,6,942,262,7,958,281,5,863,292,5,881,299,5,718,276,4,714,307,5,735,320,8,713,330,4,682,322,5,797,334,5,953,308,8,980,313,4,998,318,4,1041,319,5,912,323,6,937,322,4,935,345,8,955,352,4,1022,343,4,1052,347,5,779,375,5,963,247,6,995,247,6,
    1009,398,8,1033,406,4,989,419,4,1007,432,4,984,445,7,1023,462,5,946,555,6,949,575,4,972,581,3,998,574,4,1000,594,5,943,594,3,1020,613,3,1004,656,4,1050,680,6,1073,627,4,1064,660,4,1004,777,8,947,789,5,980,792,4,1026,784,4,964,802,5,1030,799,4,1050,814,6,954,826,5,1038,858,5,
    20,398,3,19,421,9,30,453,4,9,512,4,17,606,5,14,633,4,15,653,8,14,681,5,30,711,4,16,720,6,38,735,3,20,853,5,28,876,4,31,902,4,20,917,4,32,935,6,12,995,8,17,1031,6,21,1117,4,26,1142,5,40,1161,4,17,1236,4,
    747,876,5,580,918,5,605,918,6,566,928,4,884,882,5,893,918,4,966,969,5,955,980,4,902,1004,4,885,992,8,836,998,5,918,1031,4,902,1048,4,915,1071,5,1050,1065,6,1070,1073,4,853,1113,6,970,1132,3,961,1152,5,932,1157,5,961,1177,8,982,1157,5,999,1172,4,1034,1210,3,1029,1225,4,856,1268,5,868,1288,8,893,1284,4,949,1276,4,944,1292,7,1066,1278,5,1067,1298,5,
    915,1384,7,939,1385,9,966,1378,5,968,1396,3,950,1407,4,924,1410,3,840,1400,5,832,1417,3,1034,1366,4,1040,1386,8,1025,1407,4,1023,1472,5,1007,1480,3,1030,1499,8,1006,1501,4,1036,1519,4,1024,1541,4,1039,1554,4,1022,1619,4,1026,1636,6,1043,1631,5,1058,1628,4,863,1525,4,957,1654,5,979,1648,8,1046,1660,6,1013,1708,4,1008,1728,6,1025,1733,4,1046,1752,5,1053,1774,7,1061,1805,5,827,1743,4,827,1765,5,846,1764,6,847,1785,4,935,1790,5,692,1791,7,755,1802,5,773,1802,5,743,1821,8,714,1812,4,575,1745,6,594,1743,6,568,1761,4,617,1736,7,679,1774,3,563,1826,5,
    341,1748,6,328,1761,4,352,1764,4,391,1811,5,361,1811,8,335,1806,4,285,1826,4,466,1756,6,484,1774,6,463,1780,8,103,1820,4,125,1821,3,15,1700,6,22,1724,5,16,1583,4,
    18,1855,4,34,1855,4,27,1882,9,7,1898,4,32,1908,4,54,1911,4,82,1920,8,52,1936,4,8,1956,8,66,1951,7,89,1952,6,205,1868,4,226,1872,6,251,1887,4,266,1908,4,308,1911,4,256,1925,8,151,1964,5,169,1960,6,189,1962,5,254,1966,6,275,1962,5,135,2009,6,146,2036,7,117,2031,4,127,2046,4,167,2047,4,141,2074,4,32,2080,5,62,2078,8,297,2056,6,433,1978,4,450,1997,7,479,2056,5,510,2049,5,520,2065,4,537,2043,10,520,1926,7,13,2210,12,71,2208,5,101,2204,4,188,2206,8,
    731,1938,8,838,1856,4,870,1854,6,884,1850,4,835,1874,4,849,1938,4,921,1920,7,940,1908,8,967,1895,5,967,1920,4,1007,1916,4,1026,1894,5,1047,1899,4,1053,1867,6,1050,1929,8,1042,1994,4,614,2065,9,634,2069,4,673,2062,8,701,2072,5,727,2070,4,824,2063,6,924,2094,8,953,2096,5,930,2164,6,923,2184,4,728,2210,6,754,2209,7,903,2208,5];
  // larger marks: shape, x, y, scale, rotation
  const marks = [["cloud",40,276,1,0],["cloud",315,290,.9,-10],["cloud",822,282,.9,5],["cloud",876,354,.9,-8],["cloud",1078,262,1,0],["cloud",545,890,1,0],["cloud",40,1980,.9,-12],["cloud",393,1953,.9,0],
    ["star",253,288,1,0],["star",165,338,1,5],["star",23,368,1,-5],["star",911,285,1,10],["star",1078,318,1,0],["star",1041,643,1,10],["star",1005,825,1.5,0],["star",1005,1385,1.1,10],["star",1035,1436,1,5],["star",1063,1537,1,15],["star",32,1668,1,0],["star",108,2065,1,10],["star",1055,1960,.9,20],["star",955,2204,1.2,0],["star",1050,1845,1,0],["star",325,1828,1.2,10],["star",827,1370,1,0],
    ["spark",422,258,1,0],["spark",253,344,.9,0],["spark",230,375,.9,0],["spark",749,285,.8,0],["spark",833,329,.9,0],["spark",966,395,1.2,0],["spark",1001,487,1,0],["spark",984,551,1.1,0],["spark",28,487,1,0],["spark",38,686,.8,0],["spark",880,957,1,0],["spark",931,993,1,0],["spark",1047,1258,1,0],["spark",1012,1673,.8,0],["spark",119,1980,1,0],["spark",409,1995,1,0],["spark",727,1905,.8,0],["spark",20,1275,1,0],["spark",1030,238,1,20],["spark",870,2205,.9,0],
    ["drop",20,312,.6,0],["drop",40,316,.6,0],["drop",61,310,.6,-20],["drop",1051,735,1,10],["drop",1070,755,1,-15],["drop",1050,772,1.1,10],["drop",1073,795,1.1,-10],["drop",862,1500,.8,15],["drop",914,1500,1,-10],["drop",940,1505,.8,-10],["drop",30,1460,1,0],["drop",30,1533,1.3,0],["drop",38,1570,.9,0],
    ["heart",368,268,1,0],["heart",24,1930,1,0],["gear",206,257,.9,0],["gear",35,1078,1.1,0],["gear",441,2039,.9,0],["gear",1030,2085,.9,0],
    ["planet",588,252,1,-20],["planet",1015,282,1,10],["bolt",995,350,.9,0],["bolt",1068,840,1,0],["bolt",915,882,.7,-15],["note",658,920,.8,0],["note",356,1865,.8,0],
    ["bubble",1065,450,.7,-15],["bubble",1035,1030,.6,-6],["bubble",1076,1588,.8,-4],["bubble",115,1866,1.05,-5],["bubble",165,1918,1,-5],
    ["camera",708,952,.9,8],["camera",795,1905,.9,-8],["pin",867,1017,.8,-5],["pin",904,1180,1,8],["slice",622,1802,1,0],["slice",988,1953,.6,15],["mic",431,1758,.8,8],["mic",1066,1696,1.1,-8],
    ["flop",865,1910,1,0],["flop",915,1876,1,25],["monkey",1055,530,1,-5]];
  document.getElementById("doodle-dots").innerHTML =
    rings.map((v, i) => i % 3 ? "" : `<circle cx="${v}" cy="${rings[i + 1]}" r="${rings[i + 2]}"/>`).join("");
  document.getElementById("doodle-marks").innerHTML =
    marks.map(([n, x, y, s, r]) => `<use href="#d-${n}" transform="translate(${x} ${y}) rotate(${r}) scale(${s})"/>`).join("");
</script>
</body>
</html>
